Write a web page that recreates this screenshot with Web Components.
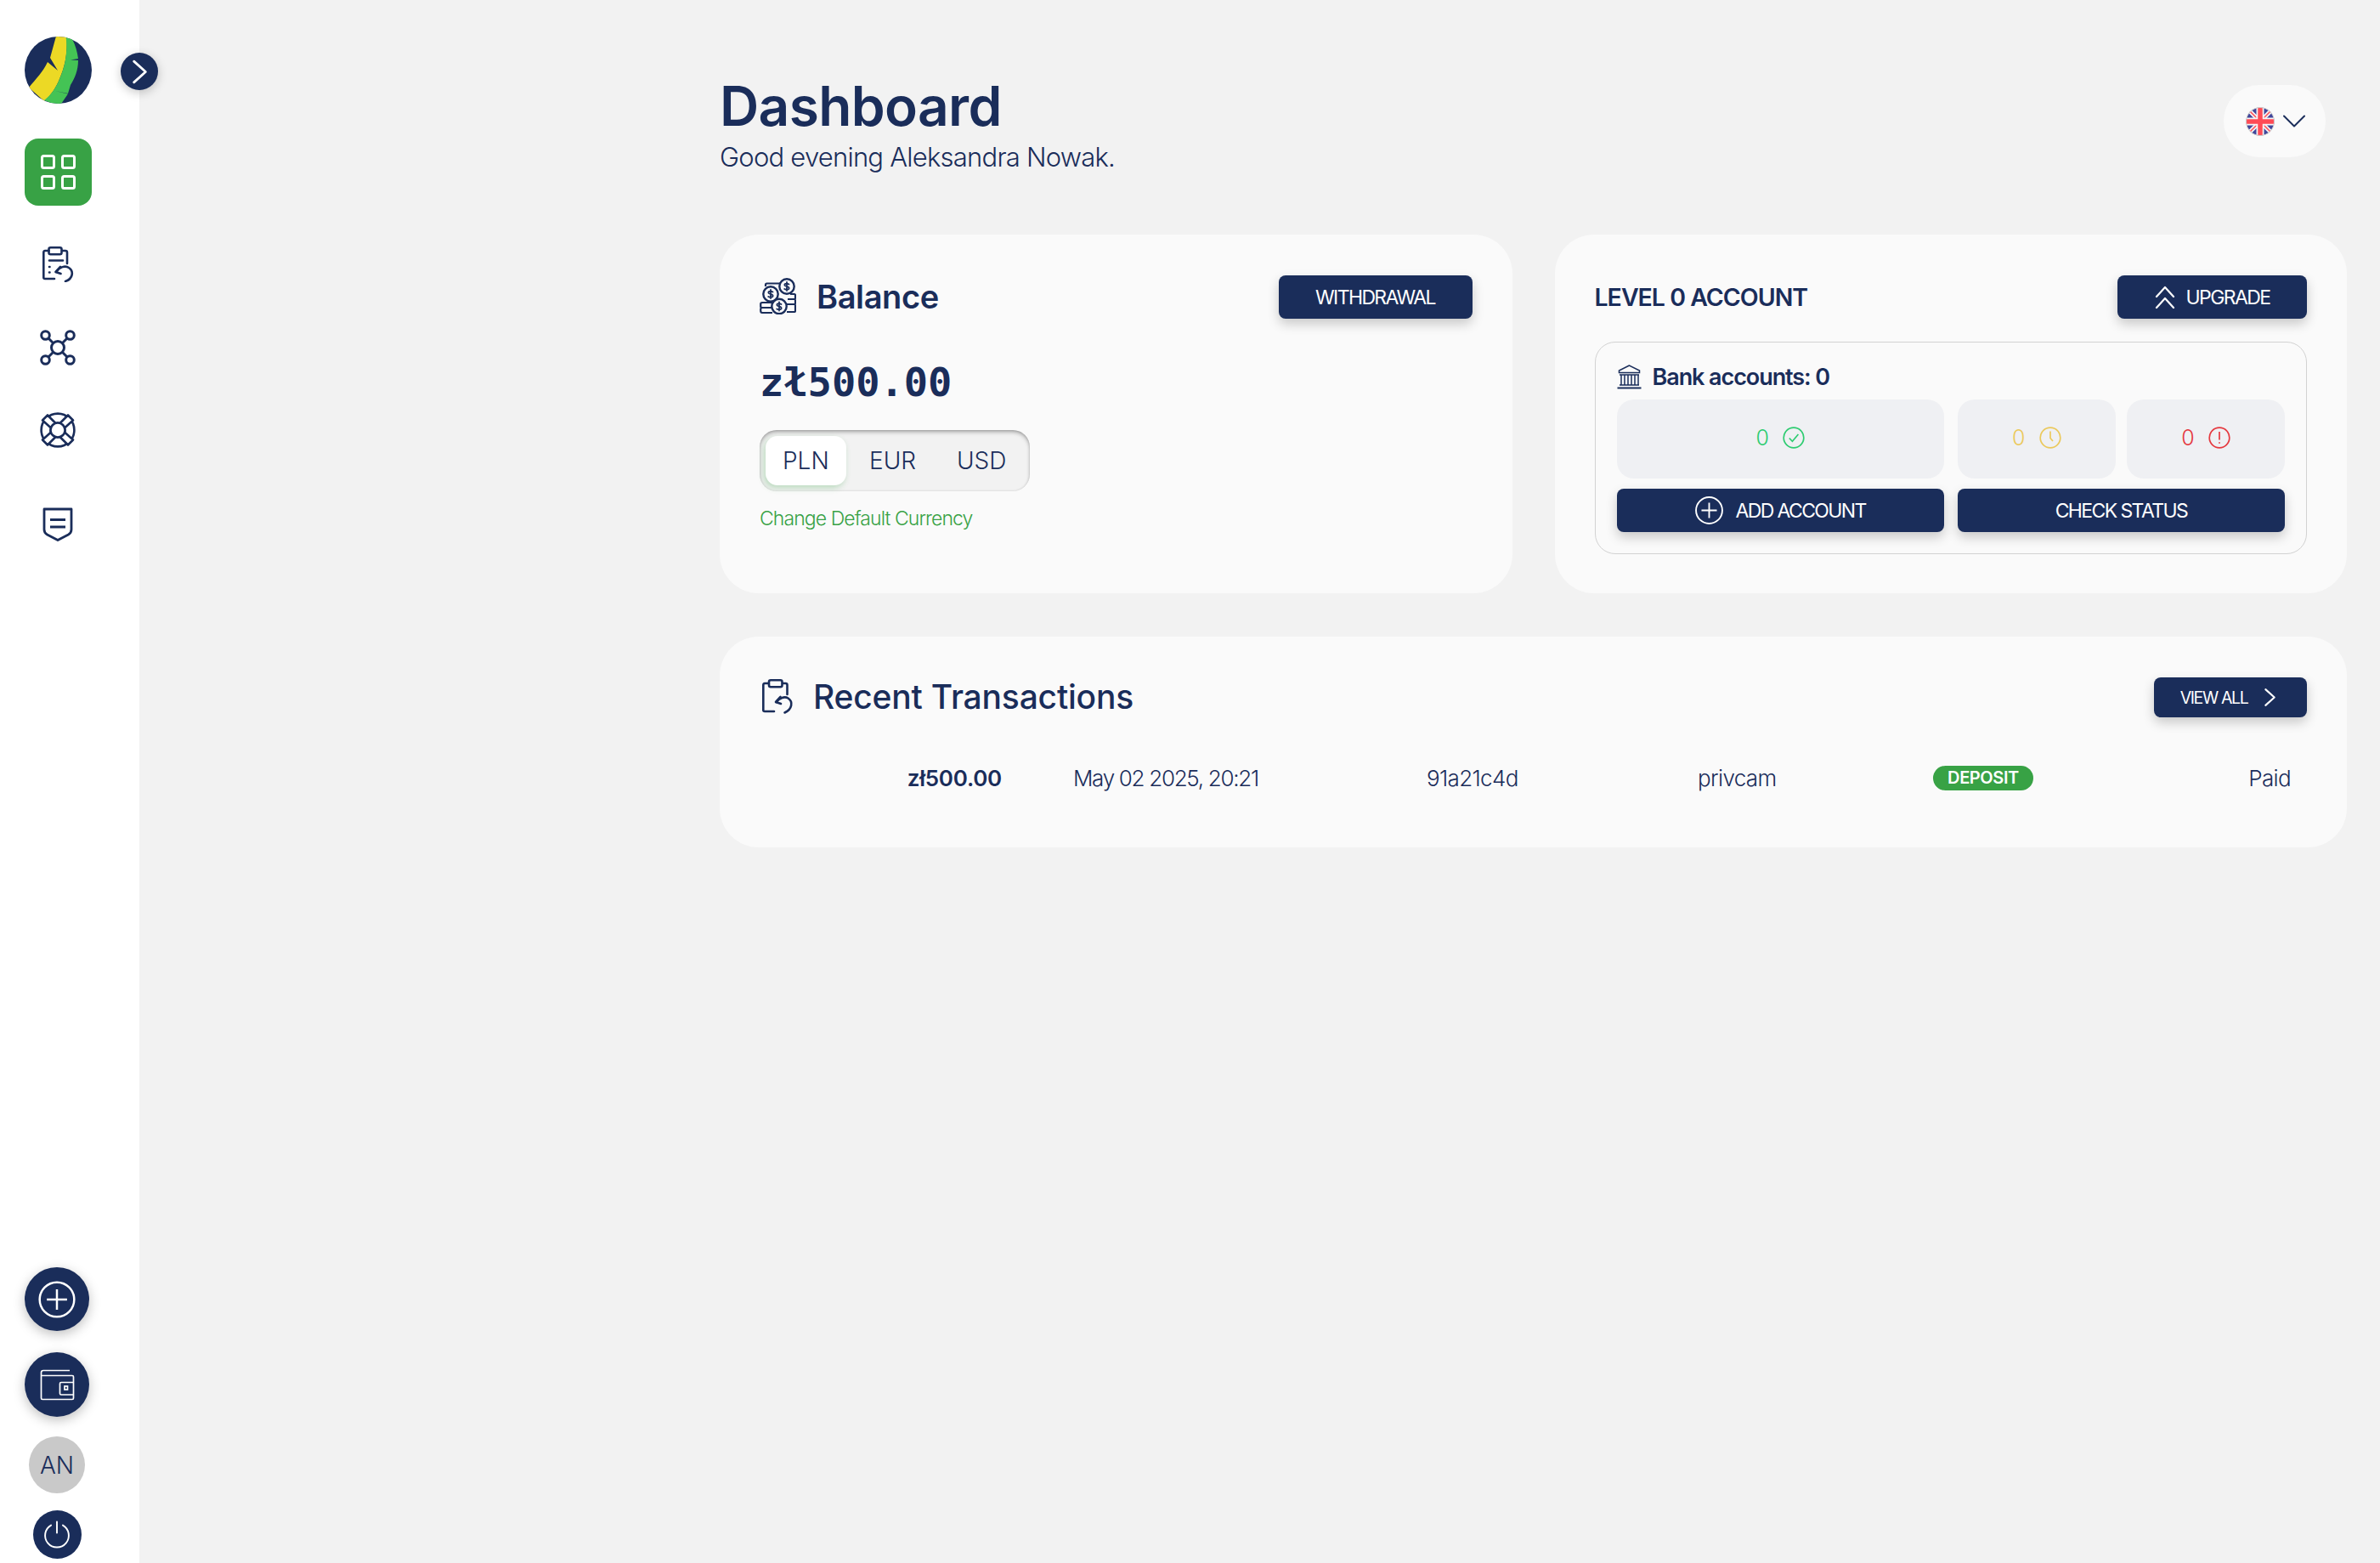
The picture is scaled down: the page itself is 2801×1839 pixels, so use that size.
<!DOCTYPE html>
<html lang="en">
<head>
<meta charset="utf-8">
<title>Dashboard</title>
<style>
  html, body { margin: 0; height: 100%; }
  body {
    background: #f2f2f2;
    color: #1a2d5a;
    font-family: Inter, "Noto Sans", "Liberation Sans", sans-serif;
    display: flex;
    min-height: 1839px;
    overflow: hidden;
  }
  svg { display: block; }
</style>
</head>
<body>

<side-rail></side-rail>

<main-area>
  <page-head></page-head>
  <balance-card></balance-card>
  <account-card></account-card>
  <recent-card>
    <tx-row amount="zł500.00" date="May 02 2025, 20:21" ref-id="91a21c4d" site="privcam" kind="DEPOSIT" state="Paid"></tx-row>
  </recent-card>
</main-area>

<script>
const NAVY = '#1a2d5a';

const ICONS = {
  chevron: '<path d="M7 3l10 9-10 9" fill="none" stroke="currentColor" stroke-width="2" stroke-linecap="round" stroke-linejoin="round"/>',
  plusCircle: '<circle cx="12" cy="12" r="10.6" fill="none" stroke="currentColor" stroke-width="1.3"/><path d="M12 5.8v12.4M5.8 12h12.4" stroke="currentColor" stroke-width="1.3" fill="none"/>',
  clipboard: `<g fill="none" stroke="currentColor" stroke-width="2.6" stroke-linecap="round" stroke-linejoin="round">
      <path d="M7.5 5H3Q1.3 5 1.3 7v29.5Q1.3 38 3 38h11M23 5h4q2 0 2 2v13"/>
      <rect x="7.5" y="1.3" width="15" height="8" rx="2"/>
      <path d="M8 16.500h16M8 24h.5M8 30.500h.5"/>
      <path d="M21 24l-5.500 6 6 2"/><path d="M16 30c4-6 11-8 15-5 6 4 5 13-4 16"/></g>`,
  network: `<g fill="none" stroke="currentColor" stroke-width="3">
      <circle cx="21" cy="21" r="7.500"/><circle cx="6.500" cy="6.500" r="4.800"/><circle cx="35.500" cy="6.500" r="4.800"/>
      <circle cx="6.500" cy="35.500" r="4.800"/><circle cx="35.500" cy="35.500" r="4.800"/>
      <path d="M10 10l5.700 5.700M32 10l-5.700 5.700M10 32l5.700-5.700M32 32l-5.700-5.700"/></g>`,
  buoy: `<g fill="none" stroke="currentColor" stroke-width="2.600" stroke-linejoin="round">
      <circle cx="21" cy="21" r="19.400"/><circle cx="21" cy="21" r="8.500"/>
      <path d="M3 9.500l6-6 9.500 9.500q-3 1-5.500 5.500zM39 9.500l-6-6-9.500 9.500q3 1 5.500 5.500zM3 32.500l6 6 9.500-9.500q-3-1-5.500-5.500zM39 32.500l-6 6-9.500-9.500q3-1 5.500-5.500z" fill="#fff"/>
      <circle cx="21" cy="21" r="8.500" fill="#fff"/></g>`,
  shield: `<g fill="none" stroke="currentColor" stroke-width="2.800" stroke-linejoin="round">
      <path d="M2 2h32v24q0 4-3.500 6L18 38.500 5.500 32Q2 30 2 26z"/><path d="M9 14.500h18M9 23h18" stroke-width="3"/></g>`,
  wallet: `<g fill="none" stroke="currentColor" stroke-width="1.700">
      <path d="M35 1.500H4Q1.500 1.500 1.500 4V34q0 1.500 1.500 1.500H38q1.500 0 1.500-1.500V9Q39.500 7.500 38 7.500H1.500"/>
      <path d="M39.500 15.500H25q-1.500 0-1.500 1.500v11.500q0 1.500 1.500 1.500h14.500"/><rect x="29" y="20" width="3.500" height="4"/></g>`,
  power: '<g fill="none" stroke="currentColor" stroke-width="1.600" stroke-linecap="round"><path d="M14 2v11"/><path d="M8.200 5.500a11.600 11.600 0 1 0 11.600 0"/></g>',
  coins: `<g fill="none" stroke="currentColor" stroke-width="2.200">
      <path d="M7 10V8q0-1.500 1.500-1.500H24"/>
      <path d="M36 19h5q1 0 1 1.500v3q0 1.500-1 1.500h-8M36 25h5q1 0 1 1.500v3q0 1.500-1 1.500h-9M33 31h8q1 0 1 1.500v6q0 1.500-1 1.500h-9"/>
      <path d="M15 29H3Q1.200 29 1.200 30.500v3q0 1.500 1.800 1.500h11M14 35H3q-1.800 0-1.800 1.500v2Q1.200 41 3 41h12"/>
      <circle cx="32" cy="10" r="8.700" fill="#fafafa" stroke-width="2.400"/><circle cx="13" cy="19" r="8.700" fill="#fafafa" stroke-width="2.400"/><circle cx="23" cy="33.500" r="8.700" fill="#fafafa" stroke-width="2.400"/></g>
      <g fill="none" stroke="currentColor" stroke-width="1.800" stroke-linecap="round">
      <path d="M34.500 7.500q-2.500-1.500-4.500-.5-1.500 1.500.5 2.500l3 1q2 1.500.5 2.800-2 1.200-4.800-.3M32 5v10"/>
      <path d="M15.500 16.500q-2.500-1.500-4.500-.5-1.500 1.500.5 2.500l3 1q2 1.500.5 2.800-2 1.200-4.800-.3M13 14v10"/>
      <path d="M25.500 31q-2.500-1.500-4.500-.5-1.500 1.500.5 2.500l3 1q2 1.500.5 2.800-2 1.200-4.800-.3M23 28.500v10"/></g>`,
  bank: `<g fill="none" stroke="currentColor" stroke-width="1.500">
      <path d="M14.500 1L2.500 7v2.500h24V7zM3 12h23M5 12v11.500M9 12v11.500M13 12v11.500M17 12v11.500M21 12v11.500M25 12v11.500M3 24h23"/><path d="M.5 27.500h28" stroke-width="2"/></g>`,
  doubleUp: '<path d="M2 13L12 2l10 11M2 26l10-11 10 11" fill="none" stroke="currentColor" stroke-width="2.200" stroke-linecap="round" stroke-linejoin="round"/>',
  check: '<circle cx="13" cy="13" r="11.800" fill="none" stroke="currentColor" stroke-width="1.700"/><path d="M7.800 13.500l3.600 3.800 7-8.300" fill="none" stroke="currentColor" stroke-width="1.700"/>',
  clock: '<circle cx="13" cy="13" r="11.800" fill="none" stroke="currentColor" stroke-width="1.700"/><path d="M13 5.500v8l3 3.500" fill="none" stroke="currentColor" stroke-width="1.700"/>',
  alert: '<circle cx="13" cy="13" r="11.800" fill="none" stroke="currentColor" stroke-width="1.700"/><path d="M13 6v9.500M13 18.300v1.500" fill="none" stroke="currentColor" stroke-width="1.700"/>',
  clipUndo: `<g fill="none" stroke="currentColor" stroke-width="2.600" stroke-linecap="round" stroke-linejoin="round">
      <path d="M7.500 5H3Q1.300 5 1.300 7v29.500Q1.300 38 3 38h11M24 5h3.500q2 0 2 2v11"/>
      <rect x="8" y="1.300" width="15.500" height="8" rx="2"/>
      <path d="M21.500 21l-5.500 6 6 2"/><path d="M16.500 27c4-5 10-7 14-4.500 6 4 5 13-4 17"/></g>`
};

function icon(name, w, h, box) {
  return `<svg width="${w}" height="${h}" viewBox="${box}" aria-hidden="true">${ICONS[name]}</svg>`;
}

class SideRail extends HTMLElement {
  constructor() {
    super();
    this.attachShadow({ mode: 'open' });
  }
  connectedCallback() {
    this.shadowRoot.innerHTML = `
      <style>
        :host {
          display: flex;
          flex-direction: column;
          position: relative;
          flex: none;
          width: 164px;
          height: 1839px;
          background: #fff;
          color: ${NAVY};
          box-sizing: border-box;
          padding-top: 43px;
        }
        svg { display: block; }
        .logo { margin-left: 29px; }
        .toggle {
          position: absolute;
          left: 142px;
          top: 62px;
          width: 44px;
          height: 44px;
          border-radius: 50%;
          background: ${NAVY};
          color: #fff;
          display: flex;
          align-items: center;
          justify-content: center;
          box-shadow: 0 3px 12px rgba(0,0,0,.22);
        }
        .active {
          margin: 41px 0 0 29px;
          width: 79px;
          height: 79px;
          border-radius: 16px;
          background: #38a245;
          display: flex;
          align-items: center;
          justify-content: center;
        }
        .item { align-self: flex-start; }
        .i1 { margin: 48px 0 0 50px; }
        .i2 { margin: 56px 0 0 47px; }
        .i3 { margin: 55px 0 0 47px; }
        .i4 { margin: 70px 0 0 50px; }
        .bottom {
          margin-top: auto;
          padding-bottom: 5px;
          display: flex;
          flex-direction: column;
          align-items: center;
          width: 134px;
        }
        .round {
          border-radius: 50%;
          background: ${NAVY};
          color: #fff;
          display: flex;
          align-items: center;
          justify-content: center;
        }
        .big { width: 76px; height: 76px; box-shadow: 0 4px 14px rgba(0,0,0,.25); }
        .plus { height: 75px; }
        .wallet { margin-top: 25px; }
        .avatar {
          margin-top: 23px;
          width: 66px;
          height: 67px;
          border-radius: 50%;
          background: #c9c9c9;
          color: ${NAVY};
          font-size: 28px;
          font-weight: 300;
          display: flex;
          align-items: center;
          justify-content: center;
        }
        .power { margin-top: 20px; width: 57px; height: 57px; }
      </style>
      <svg class="logo" width="79" height="79" viewBox="9 8 79 79" aria-hidden="true">
        <defs><clipPath id="c"><circle cx="48.500" cy="47.500" r="39.500"/></clipPath></defs>
        <g clip-path="url(#c)">
          <rect x="0" y="0" width="100" height="100" fill="#1a2d5a"/>
          <path d="M47 4H58C60 22 58 40 50 58 46 68 40 77 32 84L14 68C22 58 31 49 36 38L48 48 39 33Z" fill="#ecd925"/>
          <path d="M57 4L65 11C69 19 71 26 72 34L63 35.500 72 36C72 48 68 57 63 65L60 75 45 72 60 75.500 50 90 32 83C40 77 46 68 50 58 58 40 60 22 57 4Z" fill="#44c355"/>
        </g>
      </svg>
      <div class="toggle">${icon('chevron', 33, 33, '0 0 24 24')}</div>
      <div class="active">
        <svg width="41" height="41" viewBox="0 0 41 41" aria-hidden="true">
          <g fill="none" stroke="#fff" stroke-width="3">
            <rect x="1.500" y="1.500" width="14" height="14" rx="2"/><rect x="25.500" y="1.500" width="14" height="14" rx="2"/>
            <rect x="1.500" y="25.500" width="14" height="14" rx="2"/><rect x="25.500" y="25.500" width="14" height="14" rx="2"/>
          </g>
        </svg>
      </div>
      <div class="item i1">${icon('clipboard', 37, 42, '0 0 37 42')}</div>
      <div class="item i2">${icon('network', 42, 42, '0 0 42 42')}</div>
      <div class="item i3">${icon('buoy', 42, 42, '0 0 42 42')}</div>
      <div class="item i4">${icon('shield', 36, 40, '0 0 36 40')}</div>
      <div class="bottom">
        <div class="round big plus">${icon('plusCircle', 46, 46, '0 0 24 24')}</div>
        <div class="round big wallet">${icon('wallet', 41, 37, '0 0 41 37')}</div>
        <div class="avatar">AN</div>
        <div class="round power">${icon('power', 34, 36, '0 0 28 30')}</div>
      </div>
    `;
  }
}

class MainArea extends HTMLElement {
  constructor() {
    super();
    this.attachShadow({ mode: 'open' });
    this.shadowRoot.innerHTML = `
      <style>
        :host {
          display: grid;
          flex: 1;
          align-content: start;
          grid-template-columns: 1fr 1fr;
          column-gap: 50px;
          row-gap: 51px;
          padding: 0 39px 0 683px;
          min-width: 0;
        }
        ::slotted(page-head), ::slotted(recent-card) { grid-column: 1 / -1; }
        ::slotted(page-head) { margin-bottom: -51px; }
      </style>
      <slot></slot>
    `;
  }
}

class PageHead extends HTMLElement {
  constructor() {
    super();
    this.attachShadow({ mode: 'open' });
    this.shadowRoot.innerHTML = `
      <style>
        :host {
          display: flex;
          justify-content: space-between;
          align-items: flex-start;
          height: 276px;
          box-sizing: border-box;
          padding-top: 90px;
        }
        h1 { margin: 0; font-size: 64px; line-height: 70px; font-weight: 600; letter-spacing: -.01em; }
        p { margin: 5px 0 0; font-size: 31px; line-height: 40px; font-weight: 300; letter-spacing: -.025em; }
        .lang {
          margin: 10px 25px 0 0;
          width: 120px;
          height: 85px;
          border-radius: 42px;
          background: #fafafa;
          display: flex;
          align-items: center;
          gap: 10px;
          box-sizing: border-box;
          padding-left: 26px;
        }
        svg { display: block; }
      </style>
      <div>
        <h1>Dashboard</h1>
        <p>Good evening Aleksandra Nowak.</p>
      </div>
      <div class="lang">
        <svg width="34" height="34" viewBox="0 0 34 34" aria-hidden="true">
          <defs><clipPath id="f"><circle cx="17" cy="17" r="16.500"/></clipPath></defs>
          <g clip-path="url(#f)">
            <rect width="34" height="34" fill="#41479b"/>
            <path d="M0 0L34 34M34 0L0 34" stroke="#f5f5f5" stroke-width="5"/>
            <path d="M0 0L34 34M34 0L0 34" stroke="#ff4b55" stroke-width="1.500"/>
            <path d="M17 0V34M0 17H34" stroke="#f5f5f5" stroke-width="9"/>
            <path d="M17 0V34M0 17H34" stroke="#ff4b55" stroke-width="5.500"/>
          </g>
          <circle cx="17" cy="17" r="16.500" fill="none" stroke="#ccc" stroke-width="1"/>
        </svg>
        <svg width="26" height="15" viewBox="0 0 26 15" aria-hidden="true"><path d="M1 1.500l12 12 12-12" fill="none" stroke="${NAVY}" stroke-width="2" stroke-linecap="round" stroke-linejoin="round"/></svg>
      </div>
    `;
  }
}

class DarkBtn extends HTMLElement {
  constructor() {
    super();
    this.attachShadow({ mode: 'open' });
    this.shadowRoot.innerHTML = `
      <style>
        :host {
          display: inline-flex;
          align-items: center;
          justify-content: center;
          gap: var(--btn-gap, 13px);
          height: var(--btn-h, 51px);
          border-radius: 8px;
          background: ${NAVY};
          color: #fff;
          font-size: var(--btn-size, 23px);
          font-weight: 400;
          letter-spacing: -.07em;
          box-shadow: 0 6px 14px rgba(0,0,0,.2);
          box-sizing: border-box;
        }
      </style>
      <slot name="icon"></slot><slot></slot><slot name="after"></slot>
    `;
  }
}

class DashCard extends HTMLElement {
  constructor() {
    super();
    this.attachShadow({ mode: 'open' });
    this.shadowRoot.innerHTML = `
      <style>
        :host {
          display: block;
          background: #fafafa;
          border-radius: 46px;
          box-sizing: border-box;
          padding: 48px 47px 0 47px;
          height: var(--card-h, 422px);
        }
      </style>
      <slot></slot>
    `;
  }
}

class BalanceCard extends HTMLElement {
  constructor() {
    super();
    this.attachShadow({ mode: 'open' });
    this.shadowRoot.innerHTML = `
      <style>
        :host { display: block; }
        svg { display: block; }
        .top { display: flex; justify-content: space-between; align-items: center; height: 51px; }
        .title { display: flex; align-items: center; gap: 24px; margin-top: -2px; font-size: 38px; font-weight: 600; letter-spacing: -.01em; }
        dark-btn { width: 228px; }
        .amount {
          margin-top: 45px;
          font-family: "DejaVu Sans Mono", "Liberation Mono", monospace;
          font-size: 47px;
          font-weight: 700;
          line-height: 60px;
        }
        .seg {
          margin-top: 26px;
          width: 318px;
          height: 72px;
          box-sizing: border-box;
          padding: 7px;
          display: flex;
          border-radius: 20px;
          background: #f2f2f2;
          box-shadow: inset 0 3px 5px -1px rgba(0,0,0,.35), inset 0 0 3px rgba(0,0,0,.12);
          font-size: 28px;
          font-weight: 300;
        }
        .seg span { display: flex; align-items: center; justify-content: center; }
        .on { width: 95px; background: #fff; border-radius: 14px; box-shadow: -2px 3px 7px rgba(56,162,69,.3); }
        .eur { width: 110px; }
        .usd { width: 100px; }
        .change { margin-top: 17px; font-size: 23px; line-height: 30px; font-weight: 300; color: #38a245; letter-spacing: -.04em; }
      </style>
      <dash-card>
        <div class="top">
          <div class="title">${icon('coins', 43, 43, '0 0 43 43')}<span>Balance</span></div>
          <dark-btn>WITHDRAWAL</dark-btn>
        </div>
        <div class="amount">zł500.00</div>
        <div class="seg"><span class="on">PLN</span><span class="eur">EUR</span><span class="usd">USD</span></div>
        <div class="change">Change Default Currency</div>
      </dash-card>
    `;
  }
}

class StatTile extends HTMLElement {
  constructor() {
    super();
    this.attachShadow({ mode: 'open' });
  }
  connectedCallback() {
    this.shadowRoot.innerHTML = `
      <style>
        :host {
          display: flex;
          align-items: center;
          justify-content: center;
          gap: 16px;
          height: 93px;
          box-sizing: border-box;
          padding-bottom: 4px;
          border-radius: 20px;
          background: #eff0f3;
          color: ${this.getAttribute('color')};
          font-size: 25px;
          font-weight: 300;
        }
        svg { display: block; }
      </style>
      <span>0</span>${icon(this.getAttribute('icon'), 26, 26, '0 0 26 26')}
    `;
  }
}

class AccountCard extends HTMLElement {
  constructor() {
    super();
    this.attachShadow({ mode: 'open' });
    this.shadowRoot.innerHTML = `
      <style>
        :host { display: block; }
        svg { display: block; }
        .top { display: flex; justify-content: space-between; align-items: center; height: 51px; }
        .title { font-size: 28.500px; font-weight: 600; letter-spacing: -.035em; }
        .up { width: 223px; }
        .box {
          margin-top: 27px;
          height: 250px;
          box-sizing: border-box;
          border: 1px solid #d2d2d2;
          border-radius: 24px;
          padding: 25px 25px 0;
        }
        .bank { display: flex; align-items: center; gap: 13px; height: 30px; font-size: 27px; font-weight: 600; letter-spacing: -.04em; }
        .pair { display: grid; grid-template-columns: 1fr 1fr; column-gap: 16px; }
        .tiles { margin-top: 12px; }
        .thin { display: grid; grid-template-columns: 1fr 1fr; column-gap: 13px; }
        .btns { margin-top: 12px; }
      </style>
      <dash-card>
        <div class="top">
          <div class="title">LEVEL 0 ACCOUNT</div>
          <dark-btn class="up"><span slot="icon">${icon('doubleUp', 24, 28, '0 0 24 28')}</span>UPGRADE</dark-btn>
        </div>
        <div class="box">
          <div class="bank">${icon('bank', 29, 29, '0 0 29 29')}<span>Bank accounts: 0</span></div>
          <div class="pair tiles">
            <stat-tile color="#2ecc71" icon="check"></stat-tile>
            <div class="thin">
              <stat-tile color="#ebc95c" icon="clock"></stat-tile>
              <stat-tile color="#e5393f" icon="alert"></stat-tile>
            </div>
          </div>
          <div class="pair btns">
            <dark-btn><span slot="icon">${icon('plusCircle', 35, 35, '0 0 24 24')}</span>ADD ACCOUNT</dark-btn>
            <dark-btn>CHECK STATUS</dark-btn>
          </div>
        </div>
      </dash-card>
    `;
  }
}

class RecentCard extends HTMLElement {
  constructor() {
    super();
    this.attachShadow({ mode: 'open' });
    this.shadowRoot.innerHTML = `
      <style>
        :host { display: block; --card-h: 248px; }
        svg { display: block; }
        .top { display: flex; justify-content: space-between; align-items: center; height: 47px; }
        .title { display: flex; align-items: center; gap: 23px; margin: -2px 0 0 3px; font-size: 39px; font-weight: 500; letter-spacing: -.005em; }
        .all { width: 180px; --btn-h: 47px; --btn-size: 19.500px; --btn-gap: 14px; }
        .rows { margin-top: 53px; }
      </style>
      <dash-card>
        <div class="top">
          <div class="title">${icon('clipUndo', 37, 42, '0 0 37 42')}<span>Recent Transactions</span></div>
          <dark-btn class="all">VIEW ALL<span slot="after">${icon('chevron', 25, 25, '0 0 24 24')}</span></dark-btn>
        </div>
        <div class="rows"><slot></slot></div>
      </dash-card>
    `;
  }
}

class TxRow extends HTMLElement {
  constructor() {
    super();
    this.attachShadow({ mode: 'open' });
  }
  connectedCallback() {
    const a = n => this.getAttribute(n);
    this.shadowRoot.innerHTML = `
      <style>
        :host {
          display: grid;
          grid-template-columns: 285px 84px 416px 319px 277px 118px 1fr;
          align-items: center;
          height: 36px;
          padding-right: 19px;
          font-size: 26px;
          font-weight: 300;
          letter-spacing: -.025em;
        }
        .amt { grid-column: 1; text-align: right; font-weight: 600; letter-spacing: -.01em; }
        .date { grid-column: 3; letter-spacing: -.05em; }
        .paid { text-align: right; }
        .kind {
          justify-self: start;
          width: 118px;
          height: 29px;
          border-radius: 15px;
          background: #38a245;
          color: #fff;
          font-size: 20px;
          font-weight: 600;
          letter-spacing: -.02em;
          display: flex;
          align-items: center;
          justify-content: center;
        }
      </style>
      <span class="amt">${a('amount')}</span>
      <span class="date">${a('date')}</span>
      <span>${a('ref-id')}</span>
      <span>${a('site')}</span>
      <span class="kind">${a('kind')}</span>
      <span class="paid">${a('state')}</span>
    `;
  }
}

customElements.define('dark-btn', DarkBtn);
customElements.define('dash-card', DashCard);
customElements.define('stat-tile', StatTile);
customElements.define('side-rail', SideRail);
customElements.define('main-area', MainArea);
customElements.define('page-head', PageHead);
customElements.define('balance-card', BalanceCard);
customElements.define('account-card', AccountCard);
customElements.define('recent-card', RecentCard);
customElements.define('tx-row', TxRow);
</script>
</body>
</html>
